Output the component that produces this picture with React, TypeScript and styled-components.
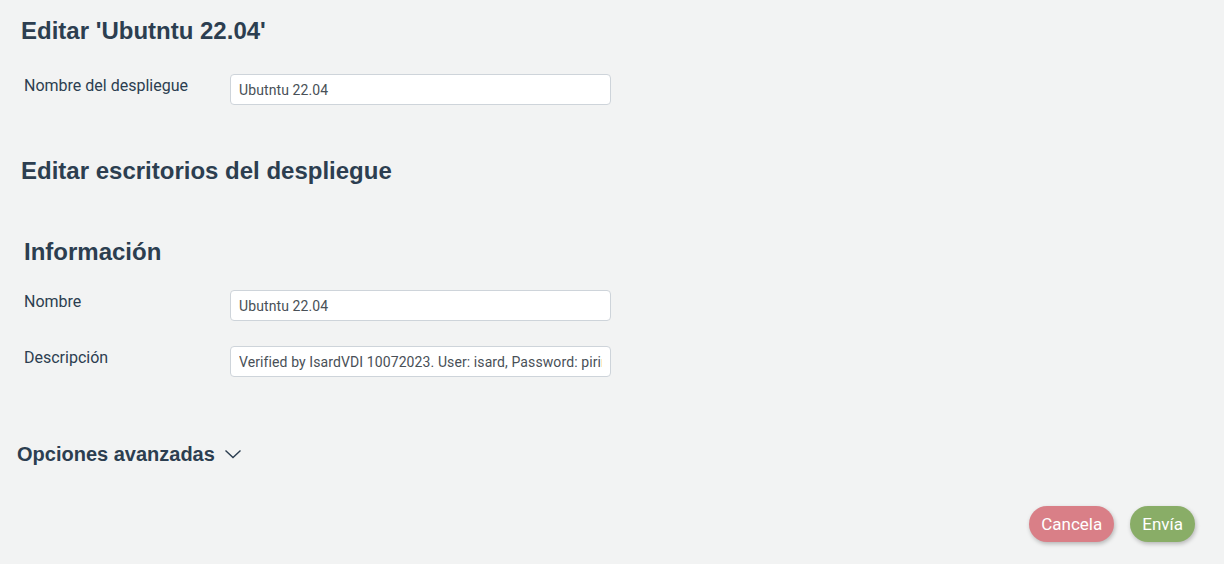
import React from "react";
import styled, { createGlobalStyle } from "styled-components";

const GlobalStyle = createGlobalStyle`
  html, body {
    margin: 0;
    padding: 0;
    background: #f2f3f3;
  }
  body {
    font-family: Roboto, "Liberation Sans", Arial, sans-serif;
    color: #2c3e50;
  }
`;

const Page = styled.div`
  width: 1224px;
  height: 564px;
  box-sizing: border-box;
  padding: 15px 29px 0 17px;
  display: flex;
  flex-direction: column;
  background: #f2f3f3;
`;

const Title = styled.h1<{ $indent?: number }>`
  margin: 0;
  padding-left: ${({ $indent }) => $indent ?? 4}px;
  font-family: "Liberation Sans", Arial, sans-serif;
  font-weight: 700;
  font-size: 24px;
  line-height: 32px;
  color: #2c3e50;
`;

const Row = styled.div`
  display: flex;
  align-items: flex-start;
  padding-left: 7px;
`;

const Label = styled.label`
  width: 206px;
  font-size: 16px;
  line-height: 24px;
  color: #2c3e50;
`;

const Input = styled.input`
  box-sizing: border-box;
  width: 381px;
  height: 31px;
  padding: 0 8px;
  border: 1px solid #ced4da;
  border-radius: 4px;
  background: #fff;
  font-family: Roboto, "Liberation Sans", Arial, sans-serif;
  font-size: 14px;
  letter-spacing: 0.1px;
  color: #495057;
  outline: none;
`;

const Advanced = styled.div`
  display: flex;
  align-items: center;
  gap: 9px;
  font-family: "Liberation Sans", Arial, sans-serif;
  font-weight: 700;
  font-size: 20px;
  line-height: 24px;
  color: #2c3e50;
`;

const Footer = styled.div`
  display: flex;
  justify-content: flex-end;
  gap: 16px;
`;

const Button = styled.button<{ $variant: "cancel" | "send" }>`
  height: 36px;
  padding: 0 12px;
  border: none;
  border-radius: 18px;
  font-family: Roboto, "Liberation Sans", Arial, sans-serif;
  font-size: 17px;
  color: #fff;
  background: ${({ $variant }) => ($variant === "cancel" ? "#d97f87" : "#89ad67")};
  box-shadow: 1px 2px 4px rgba(0, 0, 0, 0.25);
  cursor: pointer;
`;

const Chevron = () => (
  <svg width="18" height="18" viewBox="0 0 18 18" fill="none">
    <path d="M1.5 5.5 L9 12.5 L16.5 5.5" stroke="#2c3e50" strokeWidth="1.4" />
  </svg>
);

export default function App() {
  return (
    <Page>
      <GlobalStyle />
      <Title>Editar 'Ubutntu 22.04'</Title>
      <Row style={{ marginTop: 27 }}>
        <Label>Nombre del despliegue</Label>
        <Input defaultValue="Ubutntu 22.04" />
      </Row>
      <Title style={{ marginTop: 50 }}>Editar escritorios del despliegue</Title>
      <Title $indent={7} style={{ marginTop: 49 }}>
        Información
      </Title>
      <Row style={{ marginTop: 22 }}>
        <Label>Nombre</Label>
        <Input defaultValue="Ubutntu 22.04" />
      </Row>
      <Row style={{ marginTop: 25 }}>
        <Label>Descripción</Label>
        <Input defaultValue="Verified by IsardVDI 10072023. User: isard, Password: pirineus" />
      </Row>
      <Advanced style={{ marginTop: 65 }}>
        Opciones avanzadas
        <Chevron />
      </Advanced>
      <Footer style={{ marginTop: 40 }}>
        <Button $variant="cancel">Cancela</Button>
        <Button $variant="send">Envía</Button>
      </Footer>
    </Page>
  );
}
